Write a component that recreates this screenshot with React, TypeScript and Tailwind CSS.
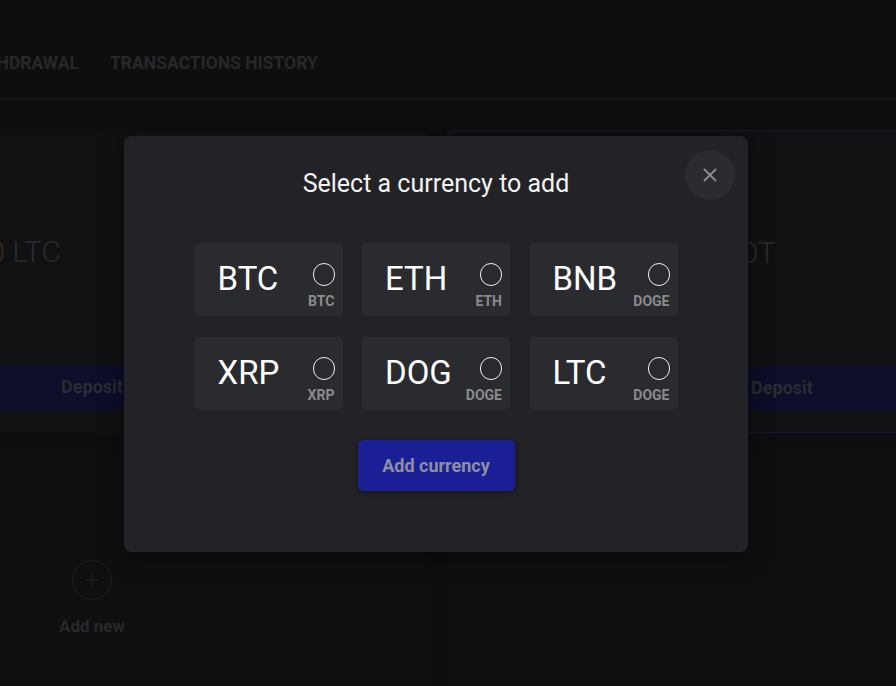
import { X, Plus } from 'lucide-react';

const currencies = [
  { name: 'BTC', code: 'BTC' },
  { name: 'ETH', code: 'ETH' },
  { name: 'BNB', code: 'DOGE' },
  { name: 'XRP', code: 'XRP' },
  { name: 'DOG', code: 'DOGE' },
  { name: 'LTC', code: 'DOGE' },
];

function WalletCard({ amountWidth, coin, selected }: { amountWidth: string; coin: string; selected?: boolean }) {
  return (
    <div
      className={`flex h-[303px] w-[670px] shrink-0 flex-col rounded-md bg-[#111113] ${
        selected ? 'border border-[#15173a]' : ''
      }`}
    >
      <div
        className={`mt-[104px] ${amountWidth} whitespace-nowrap text-right text-[30px] font-light leading-[36px] text-[#2a2a2d]`}
      >
        <span className="text-[#3a2a18]">0.0000</span> {coin}
      </div>
      <div className="mt-[95px] flex h-[45px] items-center justify-center bg-[#0c0e2a] pb-[2px] text-[18px] font-bold text-[#2b2b30]">
        Deposit
      </div>
    </div>
  );
}

export default function App() {
  return (
    <div className="relative h-[686px] w-[896px] overflow-hidden bg-[#0e0e0f] font-['Roboto',sans-serif]">
      {/* Page behind the dialog */}
      <div className="flex h-[99px] items-start border-b border-[#19191b] pt-[52px]">
        <div className="flex w-[79px] justify-end whitespace-nowrap text-[17.5px] font-bold leading-[23px] text-[#27272a]">
          WITHDRAWAL
        </div>
        <div className="ml-[31px] whitespace-nowrap text-[17.5px] font-bold leading-[23px] text-[#27272a]">
          TRANSACTIONS HISTORY
        </div>
      </div>

      <div className="ml-[-243px] mt-[31px] flex gap-5">
        <WalletCard amountWidth="w-[304px]" coin="LTC" />
        <WalletCard amountWidth="w-[328px]" coin="DOT" selected />
      </div>

      <div className="ml-[-243px] mt-5 flex gap-5">
        <div className="flex h-[250px] w-[670px] shrink-0 flex-col items-center rounded-md bg-[#0f0f10] pt-[107px]">
          <div className="flex h-10 w-10 items-center justify-center rounded-full border border-[#1f1f22]">
            <Plus size={22} strokeWidth={1} className="text-[#232326]" />
          </div>
          <div className="mt-4 text-[17px] font-bold leading-5 text-[#28282b]">Add new</div>
        </div>
        <div className="h-[250px] w-[670px] shrink-0 rounded-md bg-[#0f0f10]" />
      </div>

      {/* Dialog */}
      <div className="absolute left-[124px] top-[136px] flex h-[416px] w-[624px] flex-col items-center rounded-lg bg-[#232327] pt-[32px] shadow-[0_4px_24px_rgba(0,0,0,0.5)]">
        <button className="absolute right-[13px] top-[14px] flex h-[50px] w-[50px] items-center justify-center rounded-full bg-[#2b2b30]">
          <X size={22} strokeWidth={2} className="text-[#8d8d92]" />
        </button>

        <h2 className="text-[25px] font-normal leading-8 text-[#f2f2f2]">Select a currency to add</h2>

        <div className="mt-[43px] grid grid-cols-[148px_148px_148px] gap-x-[19.5px] gap-y-[21px]">
          {currencies.map((c) => (
            <div key={c.name} className="relative flex h-[73px] items-center rounded-[5px] bg-[#2a2b2f] pb-[2px] pl-[23px]">
              <span className="text-[33px] leading-[38px] text-white">{c.name}</span>
              <span className="absolute right-[8px] top-[20px] h-[23px] w-[22px] rounded-full border border-[#f0f0f0]" />
              <span className="absolute bottom-[7px] right-[8px] text-[14px] font-bold leading-4 text-[#8a8a8e]">
                {c.code}
              </span>
            </div>
          ))}
        </div>

        <button className="mt-[30px] h-[51px] w-[157px] rounded-[5px] bg-[#1a1f96] text-[18px] font-bold text-[#8e8ea4] shadow-[0_2px_6px_rgba(0,0,0,0.45)]">
          Add currency
        </button>
      </div>
    </div>
  );
}
